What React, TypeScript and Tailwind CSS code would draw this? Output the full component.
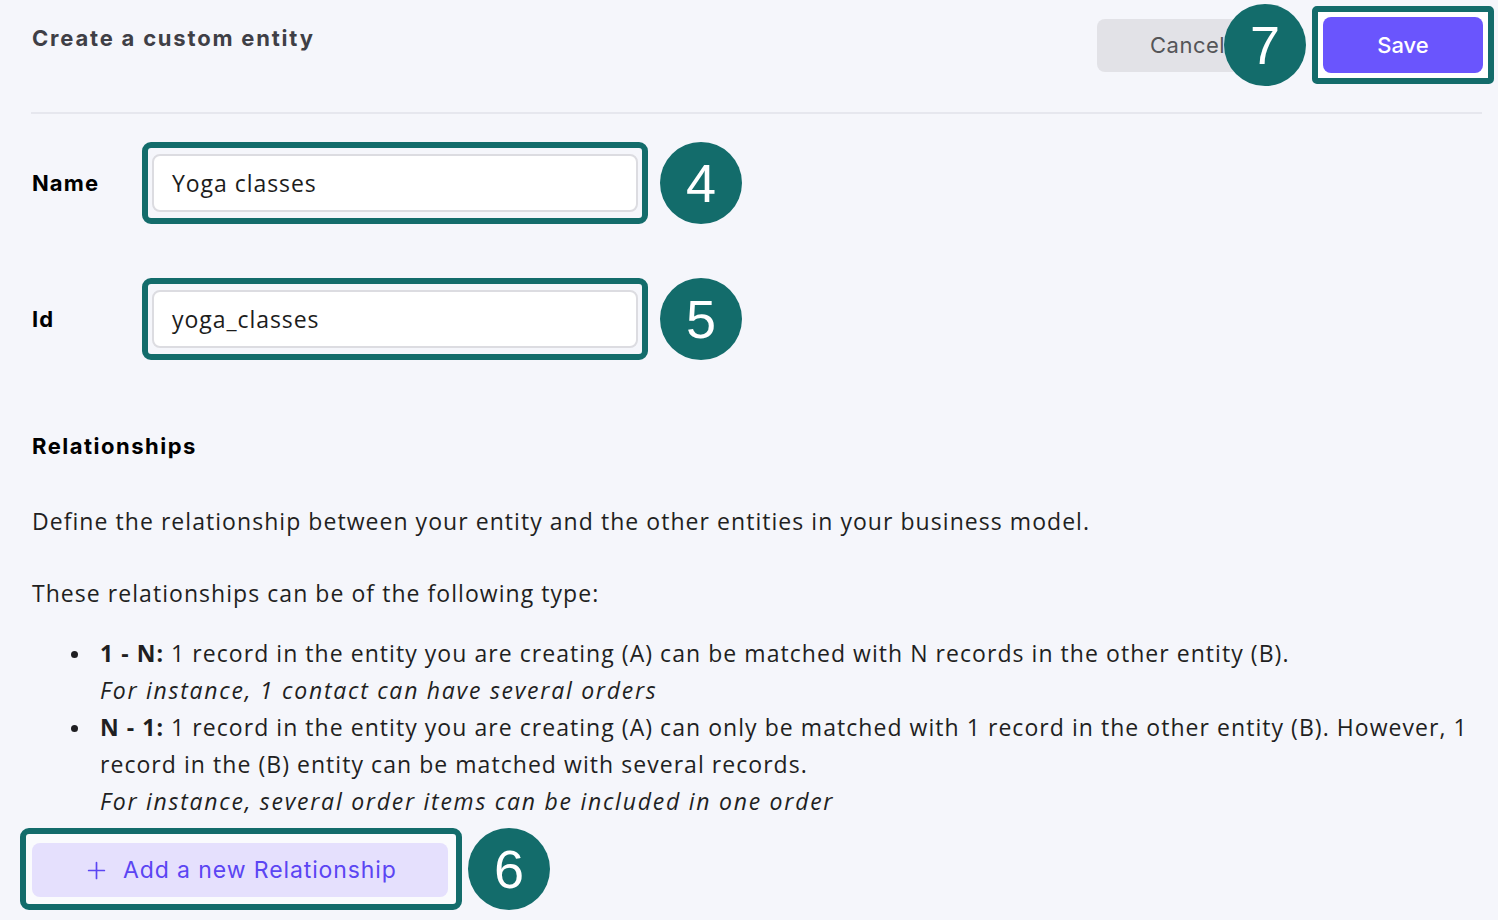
import { Plus } from "lucide-react";

const body = "font-['Open_Sans',sans-serif]";
const head = "font-['Inter',sans-serif]";

const Marker = ({ n }: { n: number }) => (
  <div className="relative z-10 flex h-[82px] w-[82px] shrink-0 items-center justify-center rounded-full bg-[#136c6b] font-['Liberation_Sans',sans-serif] text-[54px] leading-none text-white">
    {n}
  </div>
);

const Field = ({ label, value, n }: { label: string; value: string; n: number }) => (
  <div className="flex items-center">
    <div className={`w-[110px] ${head} text-[22px] font-bold tracking-[1.1px] text-black`}>
      {label}
    </div>
    <div className="w-[506px] rounded-[9px] border-[6px] border-[#136c6b] px-[4px] py-[6px]">
      <div
        className={`flex h-[58px] items-center rounded-[8px] border-2 border-[#dcdce1] bg-white pl-[18px] ${body} text-[23px] tracking-[0.95px] text-[#1c1c1c]`}
      >
        {value}
      </div>
    </div>
    <div className="ml-[12px]">
      <Marker n={n} />
    </div>
  </div>
);

const Item = ({ children }: { children: React.ReactNode }) => (
  <li className="relative">
    <span className="absolute -left-[29px] top-[16px] h-[7px] w-[7px] rounded-full bg-[#1f1f22]" />
    {children}
  </li>
);

export default function App() {
  return (
    <div className="h-[920px] w-[1498px] overflow-hidden bg-[#f5f6fb] pl-[32px] pr-[16px]">
      <div className="flex h-[112px] items-start justify-between">
        <h1 className={`pt-[22px] ${head} text-[22px] font-bold tracking-[1.8px] text-[#3f3f46]`}>
          Create a custom entity
        </h1>
        <div className="-mr-[12px] flex items-center pt-[4px]">
          <button
            className={`flex h-[53px] w-[160px] items-center rounded-[8px] bg-[#e2e2e7] pl-[53px] ${head} text-[22px] text-[#555558] tracking-[0.5px]`}
          >
            Cancel
          </button>
          <div className="-ml-[33px]">
            <Marker n={7} />
          </div>
          <div className="ml-[6px] rounded-[5px] border-[6px] border-[#136c6b] bg-white p-[5px]">
            <button
              className={`flex h-[56px] w-[160px] items-center justify-center rounded-[8px] bg-[#6a55fd] ${head} text-[22px] font-medium text-white`}
            >
              Save
            </button>
          </div>
        </div>
      </div>
      <div className="-ml-px h-[2px] bg-[#e6e7ee]" />

      <div className="mt-[28px] flex flex-col gap-[54px]">
        <Field label="Name" value="Yoga classes" n={4} />
        <Field label="Id" value="yoga_classes" n={5} />
      </div>

      <h2 className={`mt-[70px] ${head} text-[22px] font-bold tracking-[1.5px] text-black`}>
        Relationships
      </h2>

      <div className={`${body} text-[23px] leading-[37px] tracking-[1.05px] text-[#1f1f22]`}>
        <p className="mt-[40px]">
          Define the relationship between your entity and the other entities in your business
          model.
        </p>
        <p className="mt-[35px]">These relationships can be of the following type:</p>
        <ul className="mt-[23px] list-none pl-[68px]">
          <Item>
            <b>1 - N:</b> 1 record in the entity you are creating (A) can be matched with N
            records in the other entity (B).
            <br />
            <i className="tracking-[1.75px]">For instance, 1 contact can have several orders</i>
          </Item>
          <Item>
            <b>N - 1:</b> 1 record in the entity you are creating (A) can only be matched with 1
            record in the other entity (B). However, 1 record in the (B) entity can be matched with
            several records.
            <br />
            <i className="tracking-[1.75px]">
              For instance, several order items can be included in one order
            </i>
          </Item>
        </ul>
      </div>

      <div className="-ml-[12px] mt-[8px] flex items-center">
        <div className="rounded-[9px] border-[6px] border-[#136c6b] bg-[#fafbfd] pb-[7px] pl-[6px] pr-[8px] pt-[9px]">
          <button
            className={`flex h-[54px] w-[416px] items-center gap-[13px] rounded-[8px] bg-[#e5e0fd] pl-[51px] ${head} text-[23px] text-[#5b45f3] tracking-[0.9px]`}
          >
            <Plus className="h-[27px] w-[27px]" strokeWidth={1.5} />
            Add a new Relationship
          </button>
        </div>
        <div className="ml-[6px]">
          <Marker n={6} />
        </div>
      </div>
    </div>
  );
}
